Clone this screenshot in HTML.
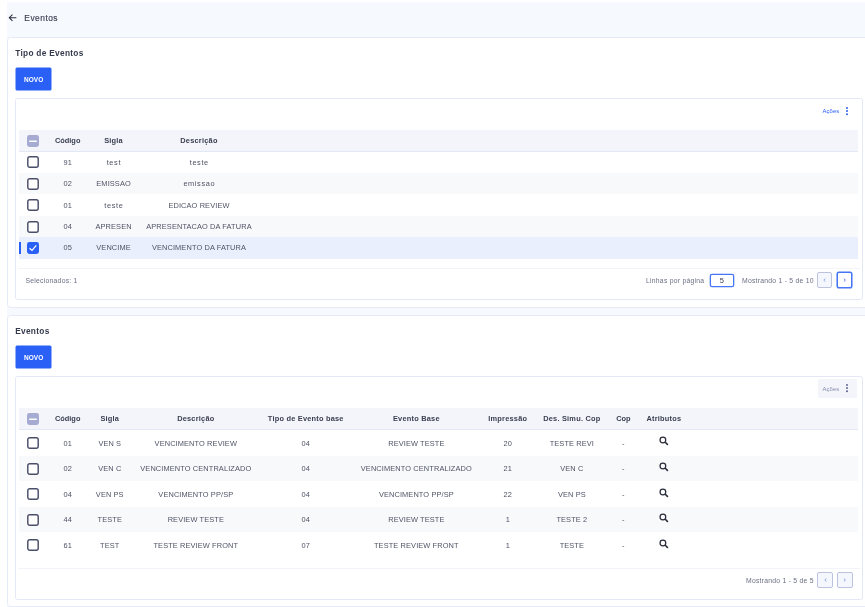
<!DOCTYPE html>
<html lang="pt-BR">
<head>
<meta charset="utf-8">
<title>Eventos</title>
<style>
*{box-sizing:border-box;margin:0;padding:0}
html,body{width:865px;height:607px;overflow:hidden;background:#fff}
body{font-family:"Liberation Sans",sans-serif;color:#4a4f63;position:relative;font-size:7px}
.main{will-change:transform;border-radius:.01px;position:absolute;left:7px;top:2px;width:858px;height:605px;background:#f6f9fe}
.topbar{position:absolute;left:0;top:0;width:858px;height:35px}
.back{position:absolute;left:1.2px;top:10.7px;width:9.4px;height:9.4px}
.ptitle{position:absolute;left:17.3px;top:10.6px;-webkit-text-stroke:.15px #3c4052;font-size:8.4px;line-height:11px;color:#3c4052;letter-spacing:.5px}
.card{position:absolute;left:0;width:870px;background:#fff;border:1px solid #e6eaf7;border-radius:3.5px}
#c1{top:35px;height:271px}
#c2{top:313px;height:292px}
.ctitle{position:absolute;left:7.2px;top:9.9px;font-size:8.3px;line-height:11px;font-weight:bold;color:#363a4e;letter-spacing:.3px}
.btn{position:absolute;left:7px;top:29px;width:36.3px;height:23.1px;transform:translate(.5px,.4px);background:#2a60f5;border-radius:1.5px;color:#fff;font-weight:bold;font-size:6.5px;line-height:25.4px;text-align:center;letter-spacing:0;border:0}
.panel{position:absolute;left:7px;top:60px;width:848px;background:#fff;border:1px solid #e4e8f6;border-radius:2.5px}
#p1{height:202px}
#p2{height:224px}
.acoes{position:absolute;right:5.5px;top:2.5px;width:38.6px;height:19.5px;border-radius:1.5px;font-size:5.9px;line-height:19.5px;color:#2a60f5;padding-left:4.5px;letter-spacing:.12px}
.acoes.off{background:#f3f5fb;color:#888cab;top:1.8px;line-height:20.9px}
.acoes.off i{color:#5f6493;top:5.7px}
.acoes i{position:absolute;left:27.7px;top:5px;width:2px;height:2px;border-radius:50%;background:currentColor;box-shadow:0 3.1px 0 currentColor,0 6.2px 0 currentColor}
table{position:absolute;left:3.4px;top:31px;width:839px;border-collapse:separate;border-spacing:0;table-layout:fixed}
th,td{text-align:center;white-space:nowrap;overflow:visible;padding:0;vertical-align:middle}
th{font-weight:bold;font-size:7.4px;letter-spacing:.22px;color:#3a3e50;height:21.5px;background:#f3f5fa;border-bottom:1px solid #e3e8f5}
td{font-size:7.4px;color:#4e5365;letter-spacing:.12px;padding-top:.2px}
td:first-child{padding-top:0}
th.n{letter-spacing:0}
td.lc{letter-spacing:.6px;text-indent:.6px}
#t1 td{height:21.42px}
#t2 td{height:25.6px}
#t2 th{height:22px}
#t2 td{padding-top:.8px}
#t2 td:first-child{padding-top:0}
tr.alt td{background:#f8f9fb}
tr.sel td{background:#e9effd}
.cb{display:block;width:12px;height:12px;margin:0 auto;position:relative;top:.2px;left:-.5px}
th .cb{top:.9px}
.selbar{position:absolute;left:3.3px;top:143px;width:1.7px;height:12px;background:#2a60f5}
.sep{position:absolute;left:1.5px;right:2.5px;height:1px;background:#f3f4f9}
.foot{position:absolute;font-size:6.8px;line-height:8px;color:#6b7084;white-space:nowrap;letter-spacing:.25px}
.pg{position:absolute;width:15.6px;height:16px;border:1px solid #bcc3de;border-radius:2px;background:#f4f7fd;color:#7f93d6}
.pg.act{border-color:#4676f6;box-shadow:0 0 0 .55px #4676f6;background:#fff;color:#2a60f5}
.pg svg{position:absolute;left:50%;top:50%;width:3.2px;height:4.2px;margin:-2.1px 0 0 -1.6px}
.inp{position:absolute;width:23.4px;height:13.4px;border:1px solid #4676f6;box-shadow:0 0 0 .3px #4676f6;border-radius:2px;background:#fff;font-size:7.5px;line-height:11px;text-align:center;color:#3a3e50}
.mag{display:inline-block;width:10px;height:10px;vertical-align:middle;position:relative;top:-1.9px;left:-.3px}
</style>
</head>
<body>
<div class="main">
  <div class="topbar">
    <svg class="back" viewBox="0 0 18 18"><path d="M16 9H3M8.5 3L2.5 9l6 6" fill="none" stroke="#2e3142" stroke-width="2.1"/></svg>
    <div class="ptitle">Eventos</div>
  </div>

  <section class="card" id="c1">
    <h2 class="ctitle">Tipo de Eventos</h2>
    <button class="btn">NOVO</button>
    <div class="panel" id="p1">
      <div class="acoes">Ações<i></i></div>
      <table id="t1">
        <colgroup><col style="width:28.4px"><col style="width:39.8px"><col style="width:52px"><col style="width:118.8px"><col></colgroup>
        <thead><tr><th><svg class="cb" viewBox="0 0 12 12"><rect x="0" y="0" width="12" height="12" rx="2.4" fill="#a5abd1"/><rect x="2.1" y="5.4" width="7.8" height="1.5" rx=".5" fill="#fff"/></svg></th><th class="n">Código</th><th>Sigla</th><th>Descrição</th><th></th></tr></thead>
        <tbody>
          <tr><td><svg class="cb" viewBox="0 0 12 12"><rect x=".8" y=".8" width="10.4" height="10.4" rx="1.9" fill="#fff" stroke="#4a4f69" stroke-width="1.45"/></svg></td><td>91</td><td class="lc">test</td><td class="lc">teste</td><td></td></tr>
          <tr class="alt"><td><svg class="cb" viewBox="0 0 12 12"><rect x=".8" y=".8" width="10.4" height="10.4" rx="1.9" fill="#fff" stroke="#4a4f69" stroke-width="1.45"/></svg></td><td>02</td><td>EMISSAO</td><td class="lc">emissao</td><td></td></tr>
          <tr><td><svg class="cb" viewBox="0 0 12 12"><rect x=".8" y=".8" width="10.4" height="10.4" rx="1.9" fill="#fff" stroke="#4a4f69" stroke-width="1.45"/></svg></td><td>01</td><td class="lc">teste</td><td>EDICAO REVIEW</td><td></td></tr>
          <tr class="alt"><td><svg class="cb" viewBox="0 0 12 12"><rect x=".8" y=".8" width="10.4" height="10.4" rx="1.9" fill="#fff" stroke="#4a4f69" stroke-width="1.45"/></svg></td><td>04</td><td>APRESEN</td><td>APRESENTACAO DA FATURA</td><td></td></tr>
          <tr class="sel"><td><svg class="cb" viewBox="0 0 12 12"><rect x="0" y="0" width="12" height="12" rx="2.4" fill="#2a60f5"/><path d="M2.5 6.3l2.5 2.2 4.3-5.1" fill="none" stroke="#fff" stroke-width="1.2"/></svg></td><td>05</td><td>VENCIME</td><td>VENCIMENTO DA FATURA</td><td></td></tr>
        </tbody>
      </table>
      <div class="selbar"></div>
      <div class="sep" style="top:169px"></div>
      <div class="foot" style="left:9.5px;top:177.5px">Selecionados: 1</div>
      <div class="foot" style="left:630px;top:177.5px">Linhas por página</div>
      <div class="inp" style="left:694.2px;top:174.6px">5</div>
      <div class="foot" style="left:726px;top:177.5px">Mostrando 1 - 5 de 10</div>
      <div class="pg" style="left:800.8px;top:173.3px"><svg viewBox="0 0 4 5"><path d="M3 .6L1 2.5l2 1.9" fill="none" stroke="currentColor" stroke-width="1"/></svg></div>
      <div class="pg act" style="left:820.7px;top:173.3px"><svg viewBox="0 0 4 5"><path d="M1 .6l2 1.9-2 1.9" fill="none" stroke="currentColor" stroke-width="1"/></svg></div>
    </div>
  </section>

  <section class="card" id="c2">
    <h2 class="ctitle">Eventos</h2>
    <button class="btn">NOVO</button>
    <div class="panel" id="p2">
      <div class="acoes off">Ações<i></i></div>
      <table id="t2">
        <colgroup><col style="width:28.4px"><col style="width:39.8px"><col style="width:44.4px"><col style="width:127.7px"><col style="width:92.2px"><col style="width:129px"><col style="width:53.8px"><col style="width:74.4px"><col style="width:28.6px"><col style="width:52.4px"><col></colgroup>
        <thead><tr><th><svg class="cb" viewBox="0 0 12 12"><rect x="0" y="0" width="12" height="12" rx="2.4" fill="#a5abd1"/><rect x="2.1" y="5.4" width="7.8" height="1.5" rx=".5" fill="#fff"/></svg></th><th class="n">Código</th><th>Sigla</th><th>Descrição</th><th>Tipo de Evento base</th><th>Evento Base</th><th>Impressão</th><th>Des. Simu. Cop</th><th class="n">Cop</th><th>Atributos</th><th></th></tr></thead>
        <tbody>
          <tr><td><svg class="cb" viewBox="0 0 12 12"><rect x=".8" y=".8" width="10.4" height="10.4" rx="1.9" fill="#fff" stroke="#4a4f69" stroke-width="1.45"/></svg></td><td>01</td><td>VEN S</td><td>VENCIMENTO REVIEW</td><td>04</td><td>REVIEW TESTE</td><td>20</td><td>TESTE REVI</td><td>-</td><td><svg class="mag" viewBox="0 0 10 10"><circle cx="3.9" cy="3.9" r="2.85" fill="none" stroke="#2a2d3a" stroke-width="1.25"/><path d="M6 6L8.9 8.9" stroke="#2a2d3a" stroke-width="1.6"/></svg></td><td></td></tr>
          <tr class="alt"><td><svg class="cb" viewBox="0 0 12 12"><rect x=".8" y=".8" width="10.4" height="10.4" rx="1.9" fill="#fff" stroke="#4a4f69" stroke-width="1.45"/></svg></td><td>02</td><td>VEN C</td><td>VENCIMENTO CENTRALIZADO</td><td>04</td><td>VENCIMENTO CENTRALIZADO</td><td>21</td><td>VEN C</td><td>-</td><td><svg class="mag" viewBox="0 0 10 10"><circle cx="3.9" cy="3.9" r="2.85" fill="none" stroke="#2a2d3a" stroke-width="1.25"/><path d="M6 6L8.9 8.9" stroke="#2a2d3a" stroke-width="1.6"/></svg></td><td></td></tr>
          <tr><td><svg class="cb" viewBox="0 0 12 12"><rect x=".8" y=".8" width="10.4" height="10.4" rx="1.9" fill="#fff" stroke="#4a4f69" stroke-width="1.45"/></svg></td><td>04</td><td>VEN PS</td><td>VENCIMENTO PP/SP</td><td>04</td><td>VENCIMENTO PP/SP</td><td>22</td><td>VEN PS</td><td>-</td><td><svg class="mag" viewBox="0 0 10 10"><circle cx="3.9" cy="3.9" r="2.85" fill="none" stroke="#2a2d3a" stroke-width="1.25"/><path d="M6 6L8.9 8.9" stroke="#2a2d3a" stroke-width="1.6"/></svg></td><td></td></tr>
          <tr class="alt"><td><svg class="cb" viewBox="0 0 12 12"><rect x=".8" y=".8" width="10.4" height="10.4" rx="1.9" fill="#fff" stroke="#4a4f69" stroke-width="1.45"/></svg></td><td>44</td><td>TESTE</td><td>REVIEW TESTE</td><td>04</td><td>REVIEW TESTE</td><td>1</td><td>TESTE 2</td><td>-</td><td><svg class="mag" viewBox="0 0 10 10"><circle cx="3.9" cy="3.9" r="2.85" fill="none" stroke="#2a2d3a" stroke-width="1.25"/><path d="M6 6L8.9 8.9" stroke="#2a2d3a" stroke-width="1.6"/></svg></td><td></td></tr>
          <tr><td><svg class="cb" viewBox="0 0 12 12"><rect x=".8" y=".8" width="10.4" height="10.4" rx="1.9" fill="#fff" stroke="#4a4f69" stroke-width="1.45"/></svg></td><td>61</td><td>TEST</td><td>TESTE REVIEW FRONT</td><td>07</td><td>TESTE REVIEW FRONT</td><td>1</td><td>TESTE</td><td>-</td><td><svg class="mag" viewBox="0 0 10 10"><circle cx="3.9" cy="3.9" r="2.85" fill="none" stroke="#2a2d3a" stroke-width="1.25"/><path d="M6 6L8.9 8.9" stroke="#2a2d3a" stroke-width="1.6"/></svg></td><td></td></tr>
        </tbody>
      </table>
      <div class="sep" style="top:190.5px"></div>
      <div class="foot" style="left:730px;top:200px">Mostrando 1 - 5 de 5</div>
      <div class="pg" style="left:801.3px;top:194.8px"><svg viewBox="0 0 4 5"><path d="M3 .6L1 2.5l2 1.9" fill="none" stroke="currentColor" stroke-width="1"/></svg></div>
      <div class="pg" style="left:821px;top:194.8px"><svg viewBox="0 0 4 5"><path d="M1 .6l2 1.9-2 1.9" fill="none" stroke="currentColor" stroke-width="1"/></svg></div>
    </div>
  </section>
</div>
</body>
</html>
